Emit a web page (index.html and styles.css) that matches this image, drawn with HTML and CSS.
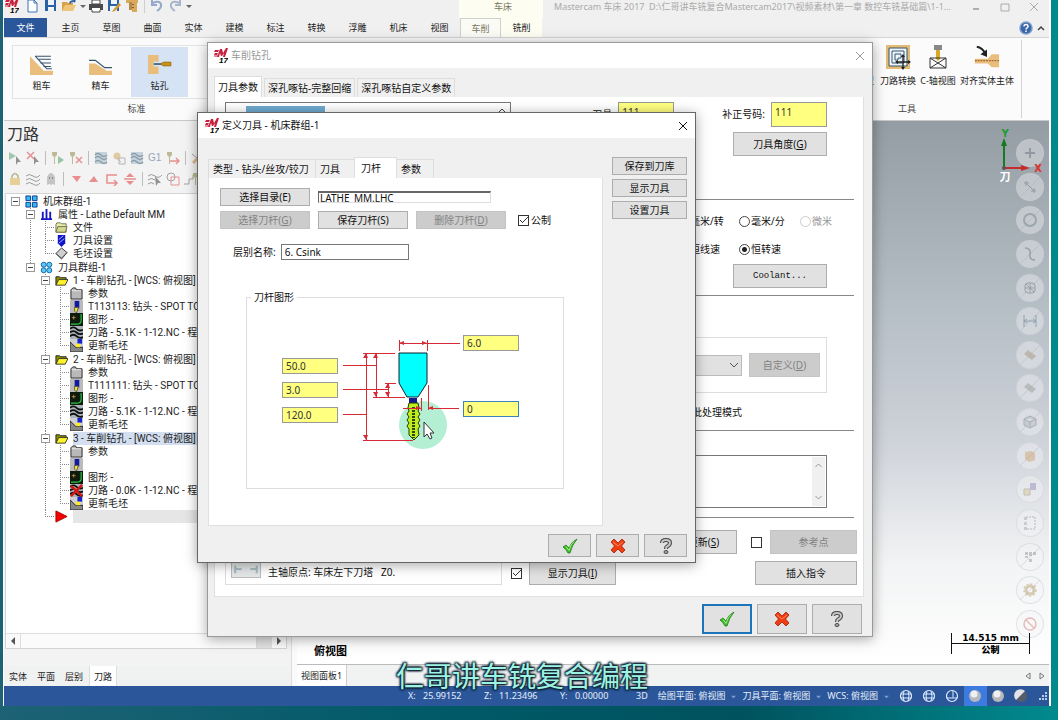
FILE: index.html
```html
<!DOCTYPE html>
<html lang="zh-CN">
<head>
<meta charset="utf-8">
<title>Mastercam 车床 2017</title>
<link rel="stylesheet" href="styles.css">
</head>
<body>
<svg class="defs" width="0" height="0" aria-hidden="true">
  <symbol id="logo" viewBox="0 0 14 16">
    <path d="M1 2h4l-1 2H0zM1 5h3l-1 2H0zM6 1h2l1 4 3-5h2l-3 9H9l1-4-2 3H7L6 5 5 9H3z" fill="#c8203c"/>
    <path d="M0 8h5" stroke="#c8203c"/>
    <text x="5" y="15" font-size="8" font-weight="bold" font-style="italic" font-family="Liberation Sans">17</text>
  </symbol>
  <symbol id="check" viewBox="0 0 16 16"><path d="M1 9l3-2 3 3q2-6 8-9Q10 7 8 15H6Q4 11 1 9z" fill="#3dbb2c" stroke="#1f7d17" stroke-width=".8"/><path d="M4 8.500l3 4q2-7 5-9" stroke="#9bef7c" fill="none"/></symbol>
  <symbol id="cross" viewBox="0 0 16 16"><path d="M1 4l3-3 4 4 4-4 3 3-3.500 4 3.500 4-3 3-4-4-4 4-3-3 3.500-4z" fill="#ee3d10" stroke="#a51d05" stroke-width=".8"/><path d="M3 4l5 4 5-4" stroke="#ff8a5a" fill="none"/></symbol>
  <symbol id="question" viewBox="0 0 16 16"><path d="M4 5q0-3 4-3t4 3q0 2-3 3.500-1 .5-1 2.500" fill="none" stroke="#444" stroke-width="4"/><path d="M4 5q0-3 4-3t4 3q0 2-3 3.500-1 .5-1 2.500" fill="none" stroke="#c3c3c8" stroke-width="2"/><ellipse cx="8" cy="14" rx="2" ry="1.500" fill="#aaa" stroke="#444"/></symbol>
  <symbol id="x" viewBox="0 0 10 10"><path d="M1 1l8 8M9 1l-8 8" stroke="currentColor" fill="none"/></symbol>
  <symbol id="new" viewBox="0 0 14 14"><path d="M2 1h6l3 3v9H2z" fill="#fff" stroke="#3b74b5"/><path d="M8 1v3h3" fill="none" stroke="#3b74b5"/></symbol>
  <symbol id="save" viewBox="0 0 14 14"><path d="M1 1h11v11H1z" fill="#2b62a5"/><path d="M4 1h6v5H4zM4 8h6v4H4z" fill="#eef3fa"/></symbol>
  <symbol id="open" viewBox="0 0 14 14"><path d="M0 3h5l1 1h5v8H0z" fill="#d9a24a"/><path d="M3 6h11l-3 6H0z" fill="#efc57a"/><path d="M7 4q1-3 5-3v-1l2 2-2 2V3Q9 3 8 5z" fill="#2b62a5"/></symbol>
  <symbol id="print" viewBox="0 0 14 14"><path d="M3 1h8v4H3zM3 9h8v4H3z" fill="#fff" stroke="#444"/><path d="M0 5h14v6H0z" fill="#4a4a4a"/><path d="M3 9h8v2H3z" fill="#fff"/></symbol>
  <symbol id="saveas" viewBox="0 0 14 14"><path d="M1 1h11v11H1z" fill="#2b62a5"/><path d="M4 1h6v4H4zM3 7h7v5H3z" fill="#eef3fa"/><path d="M6 11l6-7 2 2-6 6-3 1z" fill="#d89a35"/></symbol>
  <symbol id="pack" viewBox="0 0 14 14"><path d="M1 1h12v3H1zM7 3h5v10H7z" fill="#d9a95c"/><path d="M4 3h3v8H4z" fill="#b98a45"/><path d="M7 5h2v1H7zM7 8h2v1H7z" fill="#86612d"/></symbol>
  <symbol id="undo" viewBox="0 0 14 14"><path d="M3 4q6-3 8 1 1 4-4 7M2 1v5h5" fill="none" stroke="#93a9cc" stroke-width="2"/></symbol>
  <symbol id="redo" viewBox="0 0 14 14"><path d="M11 4Q5 1 3 5q-1 4 4 7M12 1v5H7" fill="none" stroke="#a9b6ca" stroke-width="2"/></symbol>
  <symbol id="caret" viewBox="0 0 6 6"><path d="M0 2h6L3 5z" fill="currentColor"/></symbol>
  <symbol id="help" viewBox="0 0 14 14"><circle cx="7" cy="7" r="6" fill="#3866a8" stroke="#7d9dca" stroke-width="1.500"/><path d="M5 5.500q0-2 2-2t2 2q0 1-1.300 1.700Q7 7.500 7 8.500M7 9.500v1.500" fill="none" stroke="#fff" stroke-width="1.500"/></symbol>
  <symbol id="rough" viewBox="0 0 24 20"><path d="M1 2l13 14h9v4H1z" fill="#e9be7d"/><path d="M6 2h15M9 5h12M11 8.500h10M14 12h7" stroke="#35546e" fill="none"/><path d="M6 2l11 12h5" stroke="#35546e" fill="none"/></symbol>
  <symbol id="finish" viewBox="0 0 24 20"><path d="M1 9h6l11 7h5v4H1z" fill="#e9be7d"/><path d="M1 6h6l9 7h7" stroke="#35546e" fill="none" stroke-width="1.200"/></symbol>
  <symbol id="drill" viewBox="0 0 26 22"><path d="M1 1h11v7H7v5h5v8H1z" fill="#e9be7d"/><path d="M7 10.500h8" stroke="#49708c" stroke-width="2"/><path d="M14 10.500l3-2h8v4h-8z" fill="#c69218" stroke="#8d680e" stroke-width=".7"/></symbol>
  <symbol id="xform" viewBox="0 0 26 26"><path d="M1 1h24v24H1z" fill="#e4bb75"/><path d="M4 4h18v18H4z" fill="#eef5fa" stroke="#35546e"/><path d="M7 7h12v12H7zM10 10h6v4h-3v2h-3z" fill="none" stroke="#35546e"/><path d="M18 11v14M11 18h14" stroke="#222" stroke-width="1.300"/><path d="M16 13l2-3 2 3zM16 23l2 3 2-3zM13 16l-3 2 3 2zM23 16l3 2-3 2z" fill="#222"/></symbol>
  <symbol id="caxis" viewBox="0 0 20 26"><path d="M6 1h8v5H6z" fill="#888"/><path d="M8 6h4v9l-2 2-2-2z" fill="#d9a826"/><path d="M2 14h16v10H2zM2 14l16 10M18 14L2 24" fill="none" stroke="#333"/></symbol>
  <symbol id="align" viewBox="0 0 28 26"><path d="M1 15h14l4-5h8v14h-8l-4-4H1z" fill="#e9be7d"/><path d="M1 17h26" stroke="#8a4b1c" stroke-dasharray="2 1"/><path d="M3 2q6 1 9 7" stroke="#222" stroke-width="2" fill="none"/><path d="M14 5v8l-7-3z" fill="#222"/></symbol>
  <symbol id="cells" viewBox="0 0 14 14"><path d="M1 1h5v5H1zM8 1h5v5H8zM1 8h5v5H1zM8 8h5v5H8z" fill="#35b9f0" stroke="#0b3b8c"/></symbol>
  <symbol id="props" viewBox="0 0 14 14"><path d="M3 4v8M7 1v11M11 4v8M1 12h12" stroke="#1717c4" stroke-width="2"/></symbol>
  <symbol id="folder" viewBox="0 0 14 14"><path d="M1 4l1-2h4l1 1h5v9H1z" fill="#e9edaa" stroke="#6f7150"/><path d="M3 6h10l-2 6H1z" fill="#d3d88c" stroke="#6f7150"/></symbol>
  <symbol id="toolset" viewBox="0 0 14 14"><path d="M3 1h8v9l-4 4-4-4z" fill="#1212c8"/><path d="M4 6l5-4M4 10l6-5" stroke="#9fc5ff"/></symbol>
  <symbol id="stock" viewBox="0 0 14 14"><path d="M1 7l6-6 6 5-6 7z" fill="#cfcfcf" stroke="#333"/><path d="M1 7l6 5 6-6" fill="none" stroke="#555"/></symbol>
  <symbol id="rings" viewBox="0 0 14 14"><g fill="#5fc9f0" stroke="#0a61a8"><circle cx="4" cy="4" r="2.700"/><circle cx="10" cy="4" r="2.700"/><circle cx="4" cy="10" r="2.700"/><circle cx="10" cy="10" r="2.700"/></g></symbol>
  <symbol id="yfolder" viewBox="0 0 14 14"><path d="M1 12V3h4l1 1h6v3" fill="#8d8d00" stroke="#222"/><path d="M4 6h10l-3 6H1z" fill="#fff42a" stroke="#333"/></symbol>
  <symbol id="gfolder" viewBox="0 0 14 14"><path d="M1 3l2-2h3l1 2h6v10H1z" fill="#b9b9b9" stroke="#222"/><path d="M2 4h10" stroke="#eee"/></symbol>
  <symbol id="tool" viewBox="0 0 14 14"><path d="M0 0h14v14H0z" fill="#bbb"/><path d="M5 1h5v8H5z" fill="#111a9e"/><path d="M5 8h4l-2 6-2-2z" fill="#ffee2e" stroke="#554"/></symbol>
  <symbol id="geom" viewBox="0 0 14 14"><path d="M0 0h14v14H0z" fill="#0d1c0d"/><path d="M12 1v7q0 4-5 4H1" stroke="#2bc346" fill="none" stroke-width="1.300"/><path d="M4 3v4M2 5h4" stroke="#b84"/></symbol>
  <symbol id="path" viewBox="0 0 14 14"><path d="M0 0h14v14H0z" fill="#aab4b9"/><path d="M0 3q4-3 7 0t7 1M0 7q4-3 7 0t7 1M0 11q4-3 7 0t7 1" stroke="#111" stroke-width="2" fill="none"/></symbol>
  <symbol id="badpath" viewBox="0 0 14 14"><use href="#path"/><path d="M1 2l12 11M13 1L1 13" stroke="#d81414" stroke-width="2.500"/></symbol>
  <symbol id="update" viewBox="0 0 14 14"><path d="M0 0h14v14H0z" fill="#d0d0d0"/><path d="M0 3l6 6h8v5H0z" fill="#888" stroke="#222"/><path d="M8 0h5v5H8z" fill="#1423cf"/><path d="M6 5h5v4H7z" fill="#ffec27"/></symbol>
  <symbol id="insert" viewBox="0 0 14 14"><path d="M1 1l12 6-12 6z" fill="#f40000" stroke="#a00"/></symbol>
  <symbol id="t-play" viewBox="0 0 14 14"><path d="M1 1l7 4-7 4z" fill="#4e9c6f"/><path d="M8 5l5 6-3 0-2 3z" fill="#333"/></symbol>
  <symbol id="t-clear" viewBox="0 0 14 14"><path d="M1 1l7 7M8 1L1 8" stroke="#d33" stroke-width="1.500"/><path d="M8 5l5 6-3 0-2 3z" fill="#333"/></symbol>
  <symbol id="t-toolgo" viewBox="0 0 14 14"><path d="M1 1h5v3L4 6v7H3V6L1 4z" fill="#8a8340"/><path d="M7 5l6 4-6 4z" fill="#3c9a5c"/></symbol>
  <symbol id="t-toolx" viewBox="0 0 14 14"><path d="M1 1h5v3L4 6v7H3V6L1 4z" fill="#8a8340"/><path d="M7 6l6 6M13 6l-6 6" stroke="#d33" stroke-width="1.500"/></symbol>
  <symbol id="t-wave" viewBox="0 0 14 14"><path d="M1 1h12v12H1z" fill="#9ab2c2"/><path d="M1 4q3-3 6 0t6 0M1 7q3-3 6 0t6 0M1 11q3-3 6 0t6 0" stroke="#244b66" stroke-width="1.500" fill="none"/></symbol>
  <symbol id="t-hand" viewBox="0 0 14 14"><circle cx="5" cy="5" r="3.500" fill="#cfa24d"/><path d="M5 7l4 4M7 7h6v6H7z" fill="none" stroke="#777"/></symbol>
  <symbol id="t-toolto" viewBox="0 0 14 14"><path d="M1 1h5v3L4 6v7H3V6L1 4z" fill="#8a8340"/><path d="M4 10h9M10 7l3 3-3 3" stroke="#d33" fill="none" stroke-width="1.500"/></symbol>
  <symbol id="t-pen" viewBox="0 0 14 14"><path d="M2 12L12 2" stroke="#c98431" stroke-width="3"/><path d="M1 3l5 4" stroke="#555"/></symbol>
  <symbol id="t-lock" viewBox="0 0 14 14"><path d="M4 7V4q3-5 6 0v3" fill="none" stroke="#84723e" stroke-width="1.500"/><path d="M2 6h10v7H2z" fill="#d9ae3f"/></symbol>
  <symbol id="t-lines" viewBox="0 0 14 14"><path d="M0 4q3-3 7 0t7-1M0 8q3-3 7 0t7-1M0 12q3-3 7 0t7-1" stroke="#444" fill="none"/></symbol>
  <symbol id="t-pick" viewBox="0 0 14 14"><path d="M0 4q3-3 7 0t7-1M0 8q3-3 7 0M0 12q3-3 6 0" stroke="#444" fill="none"/><path d="M7 4l6 7-3 0-2 3z" fill="#333"/></symbol>
  <symbol id="t-link" viewBox="0 0 14 14"><path d="M0 12h5V7h4V3h5" fill="none" stroke="#555"/><path d="M9 1h5v3l-2 2v7h-1V6L9 4z" fill="#8a8340"/></symbol>
  <symbol id="t-ghost" viewBox="0 0 14 14"><path d="M3 13V5q4-8 8 0v8l-2-1-2 1-2-1z" fill="#999"/><path d="M5 6h1M8 6h1" stroke="#222" stroke-width="2"/></symbol>
  <symbol id="t-down" viewBox="0 0 14 14"><path d="M3 4h9l-4 6z" fill="#df2b2b"/></symbol>
  <symbol id="t-up" viewBox="0 0 14 14"><path d="M2 10h9L7 4z" fill="#df2b2b"/></symbol>
  <symbol id="t-turn" viewBox="0 0 14 14"><path d="M12 3H2v8h9M9 8l3 3-3 3" stroke="#df2b2b" stroke-width="1.500" fill="none"/></symbol>
  <symbol id="t-split" viewBox="0 0 14 14"><path d="M1 7h12" stroke="#df2b2b" stroke-width="1.500"/><path d="M3 5h8L7 1zM3 9h8l-4 4z" fill="#df2b2b"/></symbol>
  <symbol id="t-shapes" viewBox="0 0 14 14"><circle cx="5" cy="5" r="4" fill="none" stroke="#555"/><path d="M5 5h8v8H5z" fill="none" stroke="#d33"/></symbol>
  <symbol id="globe" viewBox="0 0 14 14"><circle cx="7" cy="7" r="5.500" fill="none" stroke="#dfeaff" stroke-width="1.200"/><path d="M1.500 5h11M1.500 9h11M5 2q-2 5 0 10M9 2q2 5 0 10" stroke="#dfeaff" fill="none"/></symbol>
  <symbol id="gauge" viewBox="0 0 14 14"><circle cx="7" cy="7" r="5.500" fill="none" stroke="#dfeaff" stroke-width="1.200"/><path d="M8 1.500v7M1.500 9h11" stroke="#dfeaff"/></symbol>
  <symbol id="ball" viewBox="0 0 14 14"><circle cx="7" cy="7" r="6" fill="#b5b8bd"/><circle cx="6" cy="5" r="3.500" fill="#eef0f2"/></symbol>
  <symbol id="halfball" viewBox="0 0 14 14"><circle cx="7" cy="7" r="6" fill="#555d6a"/><path d="M2 11A6 6 0 0 1 11 2z" fill="#e2e4e8"/></symbol>
</svg>

<main class="desktop">
  <div class="app">
    <header class="titlebar">
      <div class="quick">
        <svg class="logo"><use href="#logo"/></svg>
        <button aria-label="新建"><svg><use href="#new"/></svg></button>
        <button aria-label="保存"><svg><use href="#save"/></svg></button>
        <button aria-label="打开"><svg><use href="#open"/></svg></button>
        <button class="mini" aria-label="最近"><svg><use href="#caret"/></svg></button>
        <button aria-label="打印"><svg><use href="#print"/></svg></button>
        <button aria-label="另存为"><svg><use href="#saveas"/></svg></button>
        <button aria-label="打包"><svg><use href="#pack"/></svg></button>
        <i class="vsep"></i>
        <button aria-label="撤消"><svg><use href="#undo"/></svg></button>
        <button aria-label="重做"><svg><use href="#redo"/></svg></button>
        <button class="mini" aria-label="更多"><svg><use href="#caret"/></svg></button>
      </div>
      <div class="context">车床</div>
      <div class="doc">Mastercam 车床 2017&nbsp; D:\仁哥讲车铣复合Mastercam2017\视频素材\第一章 数控车铣基础篇\1-1...</div>
      <div class="winctl">
        <button aria-label="最小化"><svg viewBox="0 0 10 10"><path d="M2 7h6" stroke="#999" stroke-width="1.500"/></svg></button>
        <button aria-label="最大化"><svg viewBox="0 0 10 10"><path d="M1 2h8v7H1z" fill="none" stroke="#aaa"/></svg></button>
        <button aria-label="关闭"><svg><use href="#x"/></svg></button>
      </div>
    </header>
    <nav class="tabs">
      <button class="file">文件</button>
      <button>主页</button><button>草图</button><button>曲面</button><button>实体</button><button>建模</button><button>标注</button><button>转换</button><button>浮雕</button><button>机床</button><button>视图</button><button class="on">车削</button><button class="ctx">铣削</button>
      <span class="grow"></span>
      <button class="ico" aria-label="帮助"><svg><use href="#help"/></svg></button>
      <button class="fold" aria-label="折叠功能区"><svg viewBox="0 0 8 8"><path d="M1 6l3-3 3 3" stroke="#444" stroke-width="1.500" fill="none"/></svg></button>
    </nav>
    <section class="ribbon">
      <div class="group std">
        <div class="gallery">
          <button><svg><use href="#rough"/></svg>粗车</button>
          <button><svg><use href="#finish"/></svg>精车</button>
          <button class="on"><svg><use href="#drill"/></svg>钻孔</button>
        </div>
        <div class="caption">标准</div>
      </div>
      <div class="group util">
        <div class="tools">
          <button class="model"><svg></svg>型</button>
          <button><svg><use href="#xform"/></svg>刀路转换</button>
          <button><svg><use href="#caxis"/></svg>C-轴视图</button>
          <button class="wide"><svg><use href="#align"/></svg>对齐实体主体</button>
        </div>
        <div class="caption">工具</div>
      </div>
    </section>

    <div class="work">
      <aside class="side">
        <h2>刀路</h2>
        <div class="bar">
          <svg><use href="#t-play"/></svg><svg><use href="#t-clear"/></svg><i class="vsep"></i><svg><use href="#t-toolgo"/></svg><svg><use href="#t-toolx"/></svg><i class="vsep"></i><svg><use href="#t-wave"/></svg><svg><use href="#t-hand"/></svg><svg><use href="#t-wave"/></svg><span class="g1">G1</span><svg><use href="#t-toolto"/></svg><i class="vsep"></i><svg><use href="#t-pen"/></svg>
        </div>
        <div class="bar">
          <svg><use href="#t-lock"/></svg><svg><use href="#t-lines"/></svg><svg><use href="#t-ghost"/></svg><i class="vsep"></i><svg><use href="#t-down"/></svg><svg><use href="#t-up"/></svg><svg><use href="#t-turn"/></svg><svg><use href="#t-split"/></svg><i class="vsep"></i><svg><use href="#t-pick"/></svg><svg><use href="#t-shapes"/></svg><svg><use href="#t-link"/></svg>
        </div>
        <div class="treebox">
          <ul class="tree">
            <li><div class="row"><button class="tg" aria-label="折叠"></button><svg><use href="#cells"/></svg><span>机床群组-1</span></div>
              <ul>
                <li><div class="row"><button class="tg" aria-label="折叠"></button><svg><use href="#props"/></svg><span>属性 - Lathe Default MM</span></div>
                  <ul>
                    <li><div class="row leaf"><svg><use href="#folder"/></svg><span>文件</span></div></li>
                    <li><div class="row leaf"><svg><use href="#toolset"/></svg><span>刀具设置</span></div></li>
                    <li><div class="row leaf"><svg><use href="#stock"/></svg><span>毛坯设置</span></div></li>
                  </ul>
                </li>
                <li class="op"><div class="row"><button class="tg" aria-label="折叠"></button><svg><use href="#rings"/></svg><span>刀具群组-1</span></div>
                  <ul>
                    <li><div class="row"><button class="tg" aria-label="折叠"></button><svg><use href="#yfolder"/></svg><span>1 - 车削钻孔 - [WCS: 俯视图]</span></div>
                      <ul>
                        <li><div class="row leaf"><svg><use href="#gfolder"/></svg><span>参数</span></div></li>
                        <li><div class="row leaf"><svg><use href="#tool"/></svg><span>T113113: 钻头 - SPOT TOOL</span></div></li>
                        <li><div class="row leaf"><svg><use href="#geom"/></svg><span>图形 -</span></div></li>
                        <li><div class="row leaf"><svg><use href="#path"/></svg><span>刀路 - 5.1K - 1-12.NC - 程序</span></div></li>
                        <li><div class="row leaf"><svg><use href="#update"/></svg><span>更新毛坯</span></div></li>
                      </ul>
                    </li>
                    <li class="op"><div class="row"><button class="tg" aria-label="折叠"></button><svg><use href="#yfolder"/></svg><span>2 - 车削钻孔 - [WCS: 俯视图]</span></div>
                      <ul>
                        <li><div class="row leaf"><svg><use href="#gfolder"/></svg><span>参数</span></div></li>
                        <li><div class="row leaf"><svg><use href="#tool"/></svg><span>T111111: 钻头 - SPOT TOOL</span></div></li>
                        <li><div class="row leaf"><svg><use href="#geom"/></svg><span>图形 -</span></div></li>
                        <li><div class="row leaf"><svg><use href="#path"/></svg><span>刀路 - 5.1K - 1-12.NC - 程序</span></div></li>
                        <li><div class="row leaf"><svg><use href="#update"/></svg><span>更新毛坯</span></div></li>
                      </ul>
                    </li>
                    <li class="op"><div class="row"><button class="tg" aria-label="折叠"></button><svg><use href="#yfolder"/></svg><span class="sel">3 - 车削钻孔 - [WCS: 俯视图]</span></div>
                      <ul>
                        <li><div class="row leaf"><svg><use href="#gfolder"/></svg><span>参数</span></div></li>
                        <li><div class="row leaf"><svg><use href="#tool"/></svg></div></li>
                        <li><div class="row leaf"><svg><use href="#geom"/></svg><span>图形 -</span></div></li>
                        <li><div class="row leaf"><svg><use href="#badpath"/></svg><span>刀路 - 0.0K - 1-12.NC - 程序</span></div></li>
                        <li><div class="row leaf"><svg><use href="#update"/></svg><span>更新毛坯</span></div></li>
                      </ul>
                    </li>
                    <li><div class="row leaf"><svg><use href="#insert"/></svg><span class="slot"></span></div></li>
                  </ul>
                </li>
              </ul>
            </li>
          </ul>
          <div class="hscroll"><button aria-label="向左"><svg viewBox="0 0 8 8"><path d="M6 0v8L2 4z" fill="#555"/></svg></button><i class="thumb"></i><button aria-label="向右"><svg viewBox="0 0 8 8"><path d="M2 0v8l4-4z" fill="#555"/></svg></button></div>
        </div>
        <div class="sidetabs"><button>实体</button><button>平面</button><button>层别</button><button class="on">刀路</button></div>
      </aside>

      <section class="view">
        <div class="canvas">
          <svg class="axes" viewBox="0 0 46 54">
            <path d="M8 40V16" stroke="#157a22" stroke-width="2"/><path d="M5 18l3-8 3 8z" fill="#157a22"/>
            <path d="M8 40h18" stroke="#c62c2c" stroke-width="2"/><path d="M25 37l9 3-9 3z" fill="#c62c2c"/>
            <circle cx="8" cy="40" r="2" fill="#555"/>
            <text x="9" y="9" font-size="10" font-weight="bold" fill="#1f9b2c" text-anchor="middle" font-family="DejaVu Sans">Y</text>
            <text x="42" y="44" font-size="10" font-weight="bold" fill="#e03030" text-anchor="middle" font-family="DejaVu Sans">X</text>
            <text x="9" y="53" font-size="11" font-weight="bold" fill="#fff" text-anchor="middle" font-family="Noto Sans CJK SC">刀</text>
          </svg>
          <div class="filters">
            <button aria-label="全部"><svg viewBox="0 0 20 20"><path d="M10 5v10M5 10h10" stroke="#66717a" stroke-width="2"/></svg></button>
            <button class="cut" aria-label="点"><svg viewBox="0 0 20 20"><path d="M4 6h5M6 4v5M11 14h5M14 11v5M7 7l7 7" stroke="#66717a"/></svg></button>
            <button class="cut" aria-label="圆"><svg viewBox="0 0 20 20"><circle cx="10" cy="10" r="6" fill="none" stroke="#77828a" stroke-width="2"/></svg></button>
            <button class="cut" aria-label="曲线"><svg viewBox="0 0 20 20"><path d="M5 4q6 0 5 6t5 6" stroke="#66717a" fill="none" stroke-width="1.500"/></svg></button>
            <button class="cut" aria-label="曲面"><svg viewBox="0 0 20 20"><rect x="5" y="5" width="10" height="10" rx="3" fill="none" stroke="#66717a"/><path d="M5 10h10M10 5v10M6 6l8 8" stroke="#66717a"/></svg></button>
            <button class="cut" aria-label="尺寸"><svg viewBox="0 0 20 20"><path d="M4 4v12M16 4v12M4 10h12M7 8l-3 2 3 2M13 8l3 2-3 2" stroke="#4f7085" fill="none"/></svg></button>
            <button class="cut" aria-label="实体面"><svg viewBox="0 0 20 20"><path d="M4 9l4-4 8 6-4 4z" fill="#a89a80"/></svg></button>
            <button class="cut" aria-label="实体边"><svg viewBox="0 0 20 20"><path d="M4 9l4-4 8 6-4 4z" fill="#9c9c98"/></svg></button>
            <button class="cut" aria-label="网格"><svg viewBox="0 0 20 20"><path d="M4 7l6-3 6 3v6l-6 3-6-3zM4 7l6 3 6-3M10 10v6" fill="#b5bcc4" stroke="#76828c"/></svg></button>
            <button class="cut" aria-label="实体"><svg viewBox="0 0 20 20"><path d="M5 6l6-1 4 2v7l-6 2-4-3z" fill="#cfa674"/></svg></button>
            <button aria-label="颜色"><svg viewBox="0 0 20 20"><path d="M10 4h6v7h-6z" fill="#9a8cc0"/><path d="M4 10h6v6H4z" fill="#d8c893" stroke="#998"/></svg></button>
            <button aria-label="群组"><svg viewBox="0 0 20 20"><path d="M6 4h9v12H6" fill="none" stroke="#888" stroke-dasharray="2 1"/><path d="M4 4h3v3H4zM4 9h3v3H4zM4 14h3v3H4z" fill="#aaa"/></svg></button>
            <button class="cut" aria-label="刀具"><svg viewBox="0 0 20 20"><path d="M5 5h3v3H5zM9 5h3v4H9zM13 5h3v3h-3zM5 9h3v2H5zM9 12h3v3H9z" fill="#999"/></svg></button>
            <button class="cut" aria-label="设置"><svg viewBox="0 0 20 20"><circle cx="10" cy="10" r="4" fill="none" stroke="#b6a070" stroke-width="3" /><circle cx="10" cy="10" r="6" fill="none" stroke="#b6a070" stroke-width="1.500" stroke-dasharray="2 2"/></svg></button>
            <button aria-label="清除"><svg viewBox="0 0 20 20"><circle cx="10" cy="10" r="6" fill="none" stroke="#d58080" stroke-width="1.500"/><path d="M6 6l8 8" stroke="#d58080" stroke-width="1.500"/></svg></button>
          </div>
          <div class="foot"><b class="vname">俯视图</b><div class="scale"><b>14.515 mm</b><b>公制</b></div></div>
        </div>
        <div class="sheet"><button>视图面板1</button><span class="nav"><svg viewBox="0 0 8 8"><path d="M6 1v6L2 4z" fill="none" stroke="#777"/></svg><svg viewBox="0 0 8 8"><path d="M2 1v6l4-3z" fill="none" stroke="#777"/></svg></span></div>
      </section>
    </div>

    <footer class="status">
      <span class="coord"><i>X:</i>25.99152</span><span class="coord"><i>Z:</i>11.23496</span><span class="coord"><i>Y:</i>0.00000</span>
      <span class="dim">3D</span><span>绘图平面: 俯视图</span><svg class="dd"><use href="#caret"/></svg><span>刀具平面: 俯视图</span><svg class="dd"><use href="#caret"/></svg><span>WCS: 俯视图</span><svg class="dd"><use href="#caret"/></svg>
      <div class="modes">
        <button aria-label="线框"><svg><use href="#globe"/></svg></button><button aria-label="消隐"><svg><use href="#globe"/></svg></button><button aria-label="隐藏线"><svg><use href="#gauge"/></svg></button><button class="on" aria-label="着色"><svg><use href="#ball"/></svg></button><button aria-label="边框着色"><svg><use href="#ball"/></svg></button><button aria-label="半透明"><svg><use href="#halfball"/></svg></button>
      </div>
      <svg class="grip" viewBox="0 0 8 8"><path d="M6 0h2v2H6zM3 3h2v2H3zM6 3h2v2H6zM0 6h2v2H0zM3 6h2v2H3zM6 6h2v2H6z" fill="#b9cbe8"/></svg>
    </footer>
  </div>

  <section class="dialog outer">
    <header><svg class="logo"><use href="#logo"/></svg><h1>车削钻孔</h1><button aria-label="关闭"><svg><use href="#x"/></svg></button></header>
    <div class="dtabs"><button class="on">刀具参数</button><button>深孔啄钻-完整回缩</button><button>深孔啄钻自定义参数</button></div>
    <div class="page">
      <div class="left">
        <div class="list"><i></i><svg viewBox="0 0 8 8"><path d="M1 6l3-3 3 3" fill="none" stroke="#444"/></svg></div>
        <div class="origin"><button aria-label="主轴原点"><svg viewBox="0 0 26 14"><path d="M3 4v7M23 4v7M3 7h6M17 7h6" stroke="#a8bac4" stroke-width="2"/></svg></button><span>主轴原点: 车床左下刀塔&nbsp;&nbsp; Z0.</span></div>
      </div>
      <div class="right">
        <div class="line nums"><label for="tn">刀具</label><input id="tn" class="y tall" value="111"><label for="on">补正号码:</label><input id="on" class="y tall" value="111"></div>
        <div class="line"><button class="btn w94">刀具角度(<u>G</u>)</button></div>
        <hr class="h1">
        <div class="line radios"><label><input type="radio" name="f">毫米/转</label><label><input type="radio" name="f">毫米/分</label><label class="dis"><input type="radio" name="f" disabled>微米</label></div>
        <div class="line radios two"><label><input type="radio" name="s">恒线速</label><label><input type="radio" name="s" checked>恒转速</label></div>
        <div class="line"><button class="btn w94 mono">Coolant...</button></div>
        <hr class="h2">
        <div class="line box"><select aria-label="类型"><option></option></select><button class="btn" disabled>自定义(<u>D</u>)</button></div>
        <div class="batch">批处理模式</div>
        <hr class="h3">
        <div class="line"><div class="memo"><textarea aria-label="注释"></textarea><span><svg viewBox="0 0 8 8"><path d="M1 6l3-3 3 3" fill="none" stroke="#999"/></svg><svg viewBox="0 0 8 8"><path d="M1 2l3 3 3-3" fill="none" stroke="#999"/></svg></span></div></div>
        <hr class="h4">
        <div class="acts"><button class="btn w86">机床更新(<u>S</u>)</button><input type="checkbox" aria-label="参考点"><button class="btn w86" disabled>参考点</button></div>
        <div class="acts last"><input type="checkbox" aria-label="显示" checked><button class="btn w86">显示刀具(<u>I</u>)</button><span class="grow"></span><button class="btn w102">插入指令</button></div>
      </div>
    </div>
    <div class="oks"><button class="btn def" aria-label="确定"><svg><use href="#check"/></svg></button><button class="btn" aria-label="取消"><svg><use href="#cross"/></svg></button><button class="btn" aria-label="帮助"><svg><use href="#question"/></svg></button></div>
  </section>

  <section class="dialog inner">
    <header><svg class="logo"><use href="#logo"/></svg><h1>定义刀具 - 机床群组-1</h1><button aria-label="关闭"><svg><use href="#x"/></svg></button></header>
    <div class="body">
      <div class="main">
        <div class="dtabs"><button class="t1">类型 - 钻头/丝攻/铰刀</button><button class="t2">刀具</button><button class="on t3">刀杆</button><button class="t4">参数</button></div>
        <div class="page2">
          <div class="grid">
            <button class="btn">选择目录(E)</button><input class="lib" aria-label="目录" value="LATHE_MM.LHC">
            <button class="btn" disabled>选择刀杆(<u>G</u>)</button><button class="btn">保存刀杆(S)</button><button class="btn" disabled>删除刀杆(<u>D</u>)</button><label class="metric"><input type="checkbox" checked>公制</label>
          </div>
          <div class="name"><label for="nm">层别名称:</label><input id="nm" value="6. Csink"></div>
          <fieldset>
            <legend>刀杆图形</legend>
            <div class="holder">
              <svg viewBox="0 0 316 184" width="316" height="184">
                <circle cx="176" cy="121" r="24" fill="#b4efd4"/>
                <path d="M152 49h28v30l-9 14h-11l-8-14z" fill="#00ffff" stroke="#123"/>
                <path d="M162 94h8v6h-8z" fill="#101a8c"/>
                <path d="M162 99h9l1 5-1 3 2 3-2 3 2 3-2 3 2 3-2 3 1 6-5 5-5-5 0-6-2-3 2-3-2-3 2-3-2-3 2-3-1-3z" fill="#c0ee1c" stroke="#243a08"/>
                <path d="M166.500 103v31" stroke="#2f4a10" stroke-width="3" stroke-dasharray="2 1"/>
                <path d="M152 47V36M180 47V36M152 39h61M116 49h32M126 93h32M138 79h11M119 49v87M129 49v44M141 79v14M96 61h33M96 85h45M96 110h23M116 136h50M181 81v25M174 94v13M156 104h18M181 104h31" stroke="#d82a35" fill="none" shape-rendering="crispEdges"/>
                <path d="M152 39l5-2v4zM180 39l-5-2v4zM119 49l-3 5h5zM129 49l-3 5h5zM119 136l-3-5h5zM129 93l-3-5h5zM141 79l-3 5h5zM141 93l-3-5h5zM181 104l5-2v4zM174 104l-5-2v4z" fill="#d82a35"/>
                <path d="M177 118v15l3-3 3 5 2-1-2-5h4z" fill="#fff" stroke="#333"/>
              </svg>
              <input class="y d1" aria-label="总长" value="50.0"><input class="y d2" aria-label="锥高" value="3.0"><input class="y d3" aria-label="伸出" value="120.0"><input class="y d4" aria-label="直径" value="6.0"><input class="y d5" aria-label="间隙" value="0">
            </div>
          </fieldset>
        </div>
      </div>
      <div class="cmds"><button class="btn">保存到刀库</button><button class="btn">显示刀具</button><button class="btn">设置刀具</button></div>
    </div>
    <div class="oks"><button class="btn" aria-label="确定"><svg><use href="#check"/></svg></button><button class="btn" aria-label="取消"><svg><use href="#cross"/></svg></button><button class="btn" aria-label="帮助"><svg><use href="#question"/></svg></button></div>
  </section>

  <p class="subtitle">仁哥讲车铣复合编程</p>
</main>
</body>
</html>
```

FILE: styles.css
```css
* { box-sizing: border-box; }
body { margin: 0; font: 10px/13px "Noto Sans", "Noto Sans CJK SC", sans-serif; color: #222; }
button, input, select, textarea { font: inherit; color: inherit; margin: 0; }
button { border: 0; background: none; padding: 0; white-space: nowrap; }
h1, h2, p, ul { margin: 0; padding: 0; font-weight: normal; }
ul { list-style: none; }
i { font-style: normal; }
svg { display: block; flex: none; }
.defs { position: absolute; }
.grow { flex: 1; }
.vsep { width: 1px; height: 14px; background: #cfcfcf; margin: 0 3px; }

.desktop { position: relative; display: flex; height: 100vh; min-height: 700px; overflow: hidden; padding: 0 7px 14px 3px; background: linear-gradient(90deg, #1d6275 0, #015a68 40%, #00525e 70%, #018a8e 100%); }
.app { flex: 1; min-width: 0; display: flex; flex-direction: column; background: #fafafa; border: solid #fff; border-width: 0 2px 0 1px; }

.titlebar { display: flex; height: 18px; background: #f0f0f0; overflow: hidden; }
.quick { display: flex; align-items: center; height: 12px; width: 455px; padding-left: 1px; }
.quick button { width: 18px; display: flex; justify-content: center; color: #666; }
.quick .mini { width: 9px; }
.quick svg { width: 14px; height: 14px; }
.quick .mini svg { width: 6px; height: 6px; }
.quick .logo { width: 14px; height: 16px; margin-right: 5px; }
.context { width: 84px; padding-left: 4px; text-align: center; background: #fdfdf1; color: #76755c; font-size: 9px; }
.doc { flex: 1; padding-left: 11px; color: #aaa; font-size: 9px; white-space: nowrap; overflow: hidden; }
.winctl { display: flex; width: 88px; height: 14px; color: #aaa; }
.winctl button { flex: 1; display: flex; justify-content: center; align-items: center; }
.winctl svg { width: 10px; height: 10px; }

.tabs { display: flex; height: 20px; background: #f0f0f0; font-size: 9px; border-bottom: 1px solid #d5d5d5; }
.tabs button { width: 41px; }
.tabs .file { width: 43px; margin-right: 3px; background: #2a579a; color: #fff; }
.tabs .on { background: #fbfbf6; border: 1px solid #d0d0d0; border-bottom: 0; color: #77765c; }
.tabs .ctx { background: #fdfdf1; }
.tabs .ico { width: 14px; margin-right: 4px; }
.tabs .ico svg { width: 14px; height: 14px; }
.tabs .fold { width: 8px; margin-right: 4px; }
.tabs .fold svg { width: 8px; height: 8px; }

.ribbon { display: flex; justify-content: space-between; height: 83px; background: #fbfbfb; border-bottom: 1px solid #c9c9c9; font-size: 9px; }
.group { display: flex; flex-direction: column; }
.caption { text-align: center; line-height: 18px; color: #444; }
.std { width: 257px; padding: 7px 0 0 8px; }
.gallery { display: flex; height: 54px; border: 1px solid #e3e3e3; padding: 1px 0; }
.gallery button { width: 57px; margin-right: 2px; display: flex; flex-direction: column; align-items: center; justify-content: flex-end; gap: 4px; padding-bottom: 5px; }
.gallery .on { background: #d6e3f4; }
.gallery svg { width: 25px; height: 21px; }
.std .caption { margin-top: 1px; }
.util { width: 245px; margin: 2px 27px 2px 0; border-right: 1px solid #d4d4d4; padding-top: 4px; }
.tools { display: flex; justify-content: flex-end; height: 56px; padding-right: 5px; }
.tools button { width: 40px; display: flex; flex-direction: column; align-items: center; gap: 4px; }
.tools .model { align-items: flex-end; padding-right: 4px; }
.tools .wide { width: 58px; }
.tools svg { width: 26px; height: 26px; }
.util .caption { padding-left: 16px; }

.work { flex: 1; min-height: 0; display: flex; }
.side { width: 288px; display: flex; flex-direction: column; background: #f3f3f3; border-right: 1px solid #ddd; }
.side h2 { font-size: 16px; line-height: 26px; padding-left: 3px; color: #333; }
.bar { display: flex; align-items: center; height: 21px; padding-left: 2px; opacity: .5; }
.bar svg { width: 14px; height: 14px; margin: 0 2px; }
.bar .g1 { width: 14px; margin: 0 2px; color: #345a86; font-family: "Liberation Sans", sans-serif; }
.bar .vsep { background: #888; }
.treebox { flex: 1; min-height: 0; margin: 4px 4px 0 1px; display: flex; flex-direction: column; background: #fff; border: 1px solid #d4d4d4; }
.tree { flex: 1; overflow: hidden; padding: 1px 0 0 5px; font-family: Roboto, "Noto Sans CJK SC", sans-serif; }
.tree ul { margin-left: 15px; }
.tree li { background: repeating-linear-gradient(#888 0 1px, #fff 1px 2px) 4px 0 / 1px 100% no-repeat; }
.tree > li, .tree li:last-child { background-size: 1px 7px; }
.tree > li { background: none; }
.tree .op { padding-top: 1px; }
.row { display: flex; align-items: center; height: 13px; white-space: nowrap; }
.row svg { width: 13px; height: 13px; margin-right: 5px; }
.tg { width: 9px; height: 9px; border: 1px solid #999; background: linear-gradient(#444, #444) center / 5px 1px no-repeat #fff; margin-right: 5px; }
.leaf::before { content: ""; width: 9px; border-top: 1px dotted #888; margin: 0 1px 0 4px; }
.row span { line-height: 13px; flex: 1; }
.row .sel { background: #d3dff0; }
.row .slot { background: #e6e6e6; height: 13px; }
.hscroll { display: flex; height: 15px; background: #e2e2e2; border-top: 1px solid #ddd; }
.hscroll button { width: 14px; background: #fafafa; display: flex; align-items: center; justify-content: center; }
.hscroll svg { width: 8px; height: 8px; }
.thumb { flex: 1; margin-right: 15px; background: #fbfbfb; border: solid #ddd; border-width: 0 1px; }
.sidetabs { display: flex; margin-top: 17px; height: 20px; background: #f0f1f1; font-size: 9px; }
.sidetabs button { width: 28px; }
.sidetabs .on { background: #fff; border: 1px solid #ddd; border-width: 0 1px; margin-left: 1px; }

.view { flex: 1; min-width: 0; display: flex; flex-direction: column; border-left: 5px solid #fafafa; }
.canvas { flex: 1; min-height: 0; display: grid; grid-template: 1fr 26px / 1fr 20px 33px; background: linear-gradient(#949ca4 0, #b8c0c8 37%, #cdd1d8 58%, #f3f4f5 82%, #fff); }
.axes { grid-area: 1 / 2 / 2 / 4; width: 46px; height: 54px; margin-top: 7px; z-index: 1; }
.filters { grid-area: 1 / 3 / 3 / 4; width: 28px; display: flex; flex-direction: column; justify-content: space-between; padding: 18px 0 26px; }
.filters button { width: 28px; height: 28px; border-radius: 50%; background: rgba(244,246,248,.4); border: 1px solid rgba(200,205,210,.5); display: flex; align-items: center; justify-content: center; }
.filters .cut { background: linear-gradient(135deg, transparent 49%, rgba(150,160,170,.3) 50%, transparent 52%), rgba(244,246,248,.4); }
.filters svg { width: 20px; height: 20px; opacity: .5; }
.foot { grid-area: 2 / 1 / 3 / 4; display: flex; justify-content: space-between; align-items: flex-start; padding: 0 19px 0 17px; color: #000; }
.vname { padding-top: 6px; font-size: 11px; }
.scale { width: 79px; height: 21px; margin-top: -5px; border: solid #111; border-width: 0 1px; display: flex; flex-direction: column; align-items: center; background: linear-gradient(#111, #111) 0 10px / 100% 1px no-repeat; font: bold 9px/10px "DejaVu Sans", "Noto Sans CJK SC", sans-serif; gap: 2px; }
.sheet { display: flex; justify-content: space-between; height: 22px; background: #f1f2f2; border-top: 1px solid #bbb; font-size: 9px; }
.sheet button { width: 50px; background: #fff; border-right: 1px solid #ccc; }
.nav { display: flex; gap: 6px; align-items: center; padding-right: 3px; }
.nav svg { width: 8px; height: 8px; }

.status { display: flex; align-items: center; height: 20px; padding-left: 404px; gap: 6px; background: #2b579a; color: #e7eefa; font-size: 9px; line-height: 12px; white-space: nowrap; }
.coord { flex: none; width: 70px; display: flex; }
.coord i { width: 15px; }
.dim { margin-left: auto; margin-right: 4px; }
.dd { width: 5px; height: 5px; color: #7d9ccb; }
.modes { display: flex; height: 20px; }
.modes button { width: 23px; display: flex; align-items: center; justify-content: center; }
.modes svg { width: 14px; height: 14px; }
.modes .on { background: #3d7be0; }
.grip { width: 8px; height: 8px; margin-right: 3px; }

.dialog { position: absolute; background: #f0f0f0; border: 1px solid #777; box-shadow: 0 2px 12px rgba(0,0,0,.35); display: flex; flex-direction: column; color: #111; }
.dialog header { display: flex; align-items: center; background: #fff; height: 25px; padding: 0 7px; }
.dialog header .logo { width: 14px; height: 16px; margin-right: 3px; }
.dialog h1 { flex: 1; font-size: 10px; }
.dialog header button svg { width: 10px; height: 10px; }
.dtabs { display: flex; align-items: flex-end; }
.dtabs button { height: 19px; padding: 0 4px; border: 1px solid #ddd; border-bottom: 0; }
.dtabs .on { height: 21px; background: #fff; }
.btn { height: 24px; background: #e1e1e1; border: 1px solid #adadad; display: flex; align-items: center; justify-content: center; color: #111; }
.btn:disabled { background: #ccc; border-color: #c4c4c4; color: #838383; }
.y { background: #ffff80; border: 1px solid #999; border-radius: 0; padding: 0 3px; width: 56px; height: 16px; color: #333; }
.y.tall { height: 25px; padding-bottom: 6px; }
input[type=checkbox] { appearance: none; width: 11px; height: 11px; border: 1px solid #333; background: #fff; flex: none; }
input[type=checkbox]:checked { background: linear-gradient(135deg, transparent 44%, #333 44% 56%, transparent 56%) 3px 1px / 6px 6px no-repeat, linear-gradient(45deg, transparent 36%, #333 36% 64%, transparent 64%) 1px 4px / 3px 3px no-repeat, #fff; }
input[type=radio] { appearance: none; width: 11px; height: 11px; border: 1px solid #444; border-radius: 50%; background: #fff; flex: none; }
input[type=radio]:checked { background: radial-gradient(circle, #222 0 2px, #fff 3px); }
input[type=radio]:disabled { border-color: #ccc; }

.outer { left: 207px; top: 42px; width: 666px; height: 595px; border-color: #999; }
.outer header { padding: 0 7px 0 6px; color: #999; }
.outer .dtabs { padding: 8px 0 0 6px; gap: 2px; }
.outer .dtabs button { padding: 0 3px; }
.page { flex: 1; min-height: 0; margin: 0 8px 0 6px; padding: 5px 6px 11px 10px; display: flex; background: #fff; border: 1px solid #e0e0e0; border-top: 0; }
.left { width: 286px; display: flex; flex-direction: column; justify-content: space-between; }
.list { height: 60px; border: 1px solid #777; display: flex; justify-content: space-between; padding: 3px 3px 0 20px; }
.list i { width: 79px; background: #6faad0; }
.list svg { width: 10px; height: 8px; }
.origin { width: 277px; height: 40px; border: 1px solid #ddd; border-top: 0; display: flex; gap: 7px; padding: 4px 5px; }
.origin button { width: 30px; height: 29px; background: #e3e6e6; border: 1px solid #bbb; padding-top: 10px; }
.origin span { padding-top: 17px; }
.origin svg { width: 28px; height: 16px; }
.right { flex: 1; display: flex; flex-direction: column; }
.line { display: flex; justify-content: flex-end; align-items: center; margin-right: 30px; }
.nums { gap: 6px; }
.nums label:nth-of-type(2) { margin-left: 42px; }
.nums + .line { margin-top: 5px; }
.w94 { width: 94px; }
.w86 { width: 87px; }
.w102 { width: 102px; }
.mono { font-family: "Liberation Mono", monospace; font-size: 9px; }
.right hr { width: 300px; margin: 0 3px 0 auto; border: 0; border-top: 1px solid #888; flex: none; }
.right .h1 { margin-top: 43px; margin-bottom: 13px; }
.right .h2 { margin-top: 7px; }
.right .h3 { margin-top: 11px; }
.right .h4 { margin-top: 9px; }
.radios { height: 16px; gap: 11px; margin-right: 24px; }
.radios label { display: flex; align-items: center; gap: 1px; width: 50px; }
.radios .dis { color: #999; width: 33px; }
.two { margin: 12px 68px 7px 0; }
.box { margin-top: 41px; height: 56px; width: 300px; align-self: flex-end; border: 1px solid #ddd; padding-right: 6px; gap: 7px; }
.box .btn { width: 71px; }
.box select { width: 160px; height: 21px; appearance: none; border: 1px solid #bbb; border-radius: 0; background: linear-gradient(45deg, transparent 42%, #555 42% 58%, transparent 58%) right 7px center / 4px 4px no-repeat, linear-gradient(-45deg, transparent 42%, #555 42% 58%, transparent 58%) right 3px center / 4px 4px no-repeat, #e1e1e1; }
.batch { text-align: right; margin: 13px 115px 0 0; }
.memo { display: flex; width: 300px; height: 53px; margin-top: 24px; border: 1px solid #777; padding: 1px; }
.memo textarea { flex: 1; min-width: 0; border: 0; resize: none; padding: 0; }
.memo span { width: 13px; background: #f0f0f0; display: flex; flex-direction: column; justify-content: space-between; align-items: center; padding: 4px 0; }
.memo svg { width: 9px; height: 8px; }
.acts { display: flex; justify-content: flex-end; align-items: center; margin-top: 12px; gap: 8px; }
.acts input { margin-left: 6px; }
.acts.last { margin-top: 7px; gap: 7px; }
.acts.last input { margin-left: 0; }
.oks { display: flex; justify-content: flex-end; gap: 5px; }
.oks .btn { width: 50px; height: 30px; }
.oks svg { width: 16px; height: 16px; }
.outer .oks { padding: 7px 10px 2px; }
.oks .def { border: 2px solid #1c74bb; }

.inner { left: 197px; top: 112px; width: 499px; height: 451px; border-color: #666; }
.body { flex: 1; min-height: 0; display: flex; gap: 9px; padding: 19px 8px 0 10px; }
.main { flex: 1; display: flex; flex-direction: column; }
.inner .dtabs button { padding: 0 0 0 4px; margin-right: -1px; text-align: left; }
.inner .dtabs .t1 { width: 108px; }
.inner .dtabs .t2 { width: 40px; }
.inner .dtabs .t3 { width: 43px; padding-left: 6px; }
.inner .dtabs .t4 { width: 38px; }
.page2 { flex: 1; background: #fff; border: 1px solid #e0e0e0; border-top: 0; padding: 10px 11px; }
.grid { display: grid; grid-template-columns: 90px 90px 90px auto; gap: 5px 8px; }
.grid .btn { height: 18px; }
.lib { grid-column: 2 / 5; width: 173px; height: 12px; margin-top: 3px; padding: 0 1px; border: 1px solid #ddd; border-top: 2px solid #666; border-left-color: #666; line-height: 14px; }
.metric { display: flex; align-items: center; gap: 2px; padding-left: 4px; }
.name { display: flex; align-items: center; gap: 5px; margin: 15px 0 0 13px; }
.name input { width: 128px; height: 16px; border: 1px solid #777; padding: 0 3px; }
fieldset { margin: 31px 27px 0 26px; padding: 0; border: 1px solid #ddd; min-width: 0; }
legend { margin-left: 4px; padding: 0 3px; }
.holder { position: relative; }
.holder .y { position: absolute; }
.d1 { left: 35px; top: 54px; }
.d2 { left: 35px; top: 78px; }
.d3 { left: 35px; top: 103px; }
.d4 { left: 216px; top: 31px; }
.holder .d5 { left: 216px; top: 97px; border-color: #3b83bd; }
.cmds { width: 76px; display: flex; flex-direction: column; gap: 4px; }
.cmds .btn { height: 18px; }
.inner .oks { padding: 8px 8px 5px; }
.inner .oks .btn { width: 43px; height: 23px; }

.subtitle { position: absolute; left: 396px; top: 657px; font: 28px/36px "Noto Sans CJK SC", sans-serif; color: #9df3e2; white-space: nowrap; text-shadow: 1px 1px 2px #123, -1px -1px 2px #123, 1px -1px 2px #123, -1px 1px 2px #123, 0 0 3px #123; }
```
